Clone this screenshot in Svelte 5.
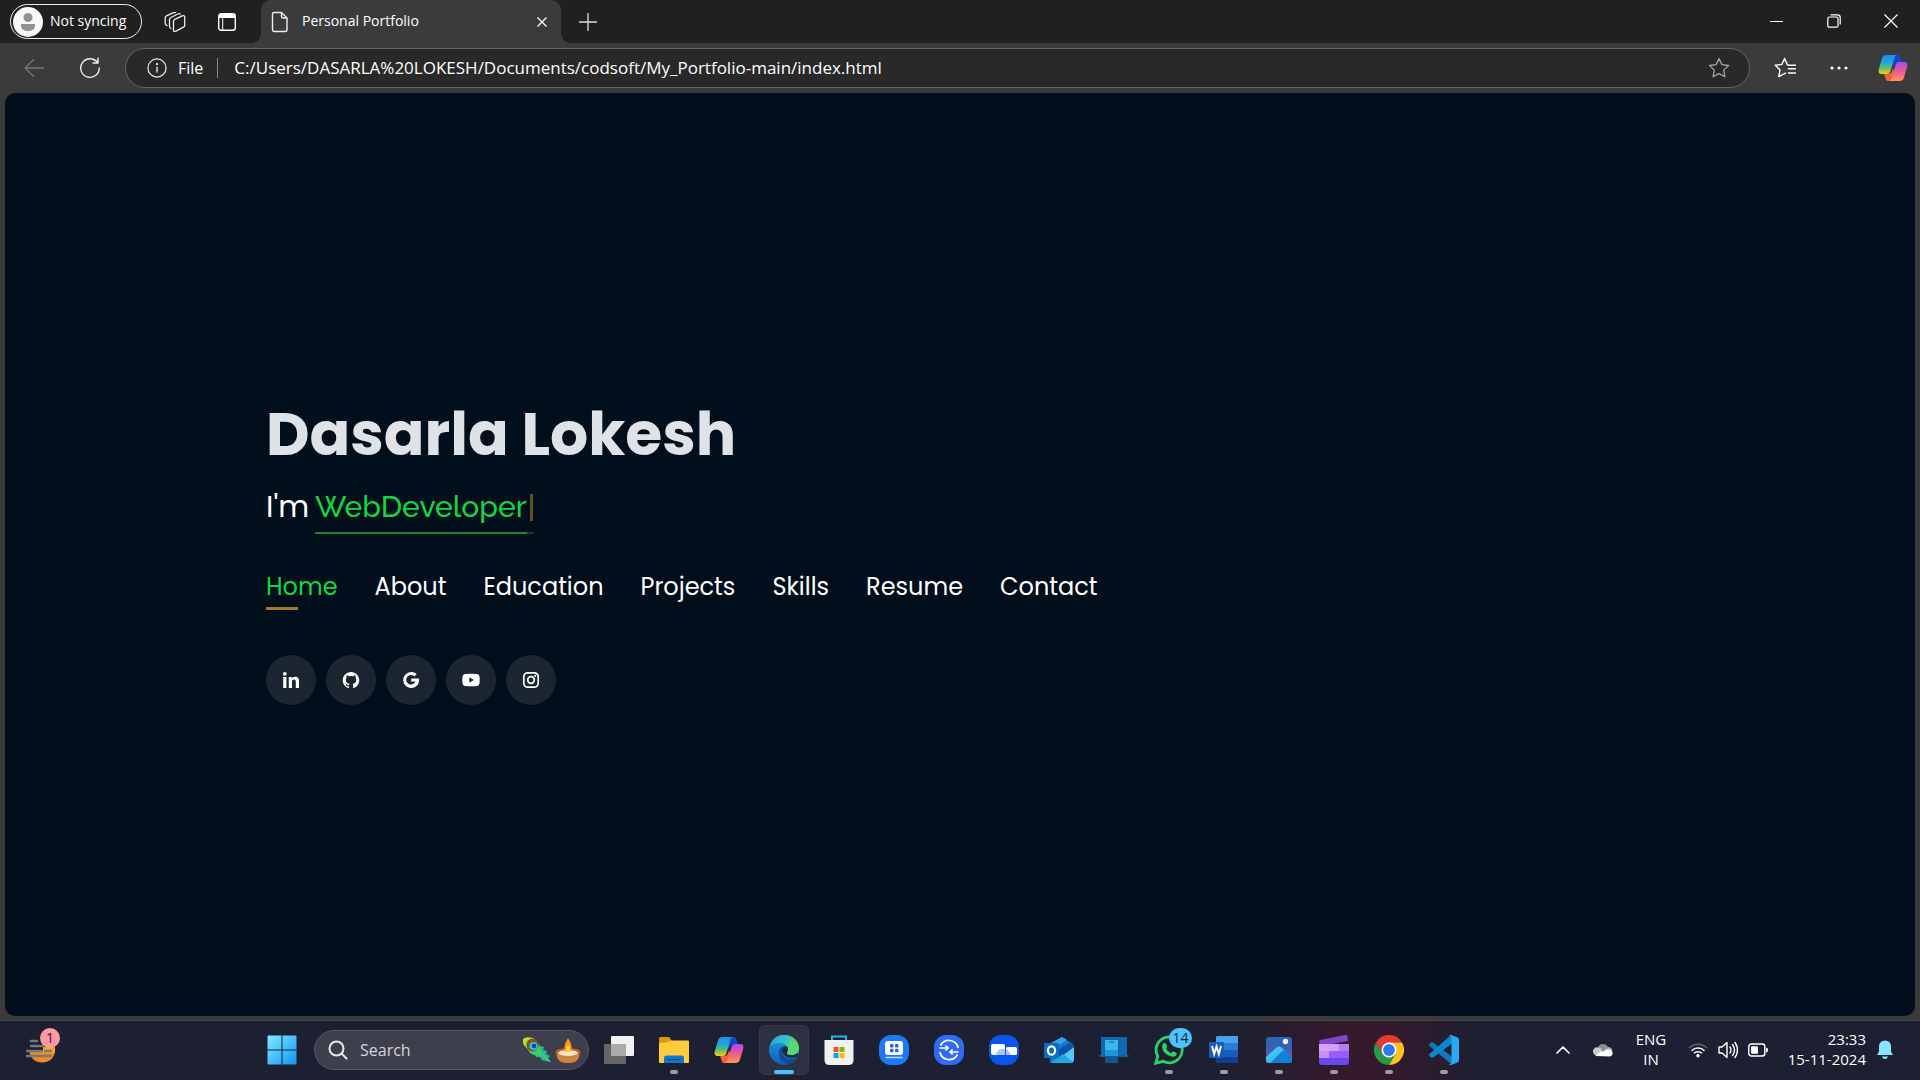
<script>
  const navLinks = ['Home', 'About', 'Education', 'Projects', 'Skills', 'Resume', 'Contact'];
</script>

{#snippet copilot()}
  <svg viewBox="0 0 30 28" width="30" height="28" aria-hidden="true">
    <defs>
      <linearGradient id="cpA" x1="0" y1="0" x2="0" y2="1"><stop offset="0" stop-color="#1c8fe8" /><stop offset=".4" stop-color="#22a6dd" /><stop offset=".68" stop-color="#5fbf6a" /><stop offset="1" stop-color="#fccb10" /></linearGradient>
      <linearGradient id="cpB" x1="0" y1="0" x2="0" y2="1"><stop offset="0" stop-color="#a54df0" /><stop offset=".45" stop-color="#e8559c" /><stop offset="1" stop-color="#ff9a4a" /></linearGradient>
    </defs>
    <path d="M16 1h3.500c1.700 0 2.500 1 3 2.600L23.800 8H20c-2 0-3.500 1.300-4 3l-1 3-2-7z" fill="#1647c8" />
    <path d="M14 27h-3.500c-1.700 0-2.500-1-3-2.600L6.200 20H10c2 0 3.500-1.300 4-3l1-3 2 7z" fill="#f4603c" />
    <path d="M8.500 1H19c-1.600.3-2.300 1.600-2.700 3L12.500 17c-.6 2-1.700 3-3.500 3H3.500C1 20 0 18 .7 15.500L4 4.500C4.700 2.200 6 1 8.500 1z" fill="url(#cpA)" />
    <path d="M21.500 27H11c1.600-.3 2.300-1.600 2.700-3L17.500 11c.6-2 1.700-3 3.500-3h5.500c2.500 0 3.500 2 2.800 4.500L26 23.500c-.7 2.300-2 3.500-4.500 3.500z" fill="url(#cpB)" />
  </svg>
{/snippet}

<div class="screen">
  <header class="tabs">
    <button class="profile">
      <svg viewBox="0 0 30 30" width="30" height="30" aria-hidden="true"><circle cx="15" cy="15" r="15" fill="#f8f8f8" /><circle cx="15" cy="10.500" r="4.500" fill="#929292" /><path d="M8 17h14v2c0 3-3 5-7 5s-7-2-7-5z" fill="#929292" /></svg>
      <span>Not syncing</span>
    </button>
    <button class="strip-btn" aria-label="Workspaces">
      <svg viewBox="0 0 22 22" width="22" height="22" fill="none" stroke="#eee" stroke-width="1.300" stroke-linejoin="round" stroke-linecap="round" aria-hidden="true"><path d="M9.500 10.500q0-1.500 1.300-2.200l7.400-3.500q2.500-.8 2.500 1.400v8q0 1.300-1.200 1.900l-7.500 4q-2.500 1-2.500-1.200z" /><path d="M7 17.500q-1.500-.5-1.500-2.500V8.700q0-1.500 1.300-2.200l7-3.500q1.500-.6 2.500 0" /><path d="M3 14.500q-1.800-.5-1.800-2.500V7q0-1.500 1.300-2.200l6.500-3q1.500-.7 2.500-.2" /></svg>
    </button>
    <button class="strip-btn" aria-label="Vertical tabs">
      <svg viewBox="0 0 20 20" width="20" height="20" aria-hidden="true"><rect x="1.700" y="1.700" width="16.600" height="16.600" rx="2.500" fill="none" stroke="#fff" stroke-width="1.400" /><path d="M2 3.500Q2 2 3.500 2h13Q18 2 18 3.500V6H2z" fill="#fff" /><path d="M5.700 6v12" stroke="#fff" /></svg>
    </button>
    <div class="tab">
      <svg viewBox="0 0 18 22" width="18" height="22" fill="none" stroke="#eee" stroke-width="1.400" stroke-linejoin="round" aria-hidden="true"><path d="M3 1.500h7.500L16 7v11.500q0 2-2 2H3.500q-2 0-2-2v-15q0-2 1.500-2z" /><path d="M10.500 1.500V5.500q0 1.500 1.500 1.500h4" /></svg>
      <span>Personal Portfolio</span>
      <button aria-label="Close tab"><svg viewBox="0 0 10 10" width="10" height="10" stroke="#fff" stroke-width="1.300" aria-hidden="true"><path d="M.5.5l9 9M9.500.5l-9 9" /></svg></button>
    </div>
    <button class="new-tab" aria-label="New tab"><svg viewBox="0 0 18 18" width="18" height="18" stroke="#ddd" stroke-width="1.300" aria-hidden="true"><path d="M9 0v18M0 9h18" /></svg></button>
    <div class="window-controls">
      <button aria-label="Minimize"><svg viewBox="0 0 14 14" width="14" height="14" aria-hidden="true"><path d="M0 7.500h13" stroke="#fff" /></svg></button>
      <button aria-label="Restore"><svg viewBox="0 0 14 14" width="14" height="14" fill="none" stroke="#fff" stroke-width="1.200" aria-hidden="true"><rect x=".8" y="3" width="10.200" height="10.200" rx="1.500" /><path d="M3.500.8h7q2.700 0 2.700 2.700v7" /></svg></button>
      <button aria-label="Close"><svg viewBox="0 0 14 14" width="14" height="14" stroke="#fff" stroke-width="1.200" aria-hidden="true"><path d="M.5.500l13 13M13.500.5l-13 13" /></svg></button>
    </div>
  </header>

  <div class="toolbar">
    <button class="tool" aria-label="Back"><svg viewBox="0 0 20 18" width="20" height="18" fill="none" stroke="#777" stroke-width="1.300" stroke-linecap="round" stroke-linejoin="round" aria-hidden="true"><path d="M19.500 9H1M9.500.8L1 9l8.500 8.200" /></svg></button>
    <button class="tool" aria-label="Refresh"><svg viewBox="0 0 22 22" width="22" height="22" fill="none" stroke="#eee" stroke-width="1.400" stroke-linecap="round" stroke-linejoin="round" aria-hidden="true"><path d="M18.500 5.500A9.300 9.300 0 1 0 20.300 11M19 1.300v4.700h-5" /></svg></button>
    <form class="address">
      <svg viewBox="0 0 22 22" width="20" height="20" fill="none" stroke="#eee" stroke-width="1.300" aria-hidden="true"><circle cx="11" cy="11" r="10" /><path d="M11 9.500v6.500" stroke-width="1.500" /><circle cx="11" cy="6.700" r=".6" fill="#eee" /></svg>
      <label for="url">File</label>
      <i class="divider"></i>
      <input id="url" type="text" value="C:/Users/DASARLA%20LOKESH/Documents/codsoft/My_Portfolio-main/index.html" />
      <button type="button" aria-label="Add to favorites"><svg viewBox="0 0 22 22" width="22" height="22" fill="none" stroke="#a5a5a5" stroke-width="1.300" stroke-linejoin="round" aria-hidden="true"><path d="M11 1.500l2.900 6.100 6.600.9-4.800 4.600 1.200 6.700-5.900-3.200-5.900 3.200 1.200-6.700L1.500 8.500l6.600-.9z" /></svg></button>
    </form>
    <button class="tool action" aria-label="Favorites"><svg viewBox="0 0 22 22" width="22" height="22" fill="none" stroke="#fff" stroke-width="1.400" stroke-linejoin="round" stroke-linecap="round" aria-hidden="true"><path d="M14.500 8.200l-1.200-.6L10.600 1.500 7.800 7.400l-6.500.9L6 13l-1.200 6.600 5.800-3 1-.6M14.500 11.700h7M14.500 8.200h7M14.500 16h7" /></svg></button>
    <button class="tool action" aria-label="Settings and more"><svg viewBox="0 0 18 4" width="18" height="4" fill="#fff" aria-hidden="true"><circle cx="2" cy="2" r="1.600" /><circle cx="9" cy="2" r="1.600" /><circle cx="16" cy="2" r="1.600" /></svg></button>
    <button class="tool action" aria-label="Copilot">{@render copilot()}</button>
  </div>

  <main>
    <div class="hero">
      <h1>Dasarla Lokesh</h1>
      <h2>I'm <span class="typed">WebDeveloper</span><span class="cursor"></span></h2>
      <nav>
        {#each navLinks as link, i}
          <a href="#{link.toLowerCase()}" class:active={i === 0}>{link}</a>
        {/each}
      </nav>
      <div class="social">
        <a href="#linkedin" aria-label="LinkedIn"><svg viewBox="0 0 18 18" aria-hidden="true"><circle cx="2.800" cy="2.800" r="1.900" /><path d="M1.200 6h3.200v11H1.200zM6.800 6h3v1.500c.6-1 1.800-1.800 3.400-1.800 3 0 3.800 2 3.800 4.700V17h-3.200v-5.700c0-1.500-.3-2.800-1.800-2.800s-2 1.200-2 2.800V17H6.800z" /></svg></a>
        <a href="#github" aria-label="GitHub"><svg viewBox="0 0 24 24" aria-hidden="true"><path d="M12 1.300C5.900 1.300 1 6.200 1 12.300c0 4.900 3.100 9 7.500 10.400.6.100.8-.2.800-.5v-2c-3.100.7-3.700-1.300-3.700-1.300-.5-1.300-1.200-1.600-1.200-1.600-1-.7.100-.7.100-.7 1.100.1 1.700 1.100 1.700 1.100 1 1.700 2.600 1.200 3.200.9.100-.7.400-1.200.7-1.500-2.400-.3-5-1.200-5-5.400 0-1.200.4-2.200 1.100-3-.1-.3-.5-1.400.1-2.900 0 0 .9-.3 3 1.100a10.500 10.500 0 0 1 5.500 0c2.100-1.400 3-1.100 3-1.100.6 1.500.2 2.600.1 2.900.7.800 1.100 1.800 1.100 3 0 4.200-2.600 5.100-5 5.400.4.300.8 1 .8 2v3.100c0 .3.200.6.800.5A11 11 0 0 0 12 1.300z" /></svg></a>
        <a href="#google" aria-label="Google"><svg viewBox="0 0 18 18" aria-hidden="true"><path d="M9.200 7.500H17c.8 5-2.200 9.500-7.700 9.500A8 8 0 1 1 14.700 3.100l-2.300 2.300A4.800 4.800 0 1 0 13.500 10.500H9.200z" /></svg></a>
        <a href="#youtube" aria-label="YouTube"><svg viewBox="0 0 18 18" aria-hidden="true"><path fill-rule="evenodd" d="M3 3q6-.6 12 0 2.300.2 2.500 2.500.5 3.500 0 7Q17.200 14.800 15 15q-6 .6-12 0Q.8 14.800.5 12.500q-.5-3.500 0-7Q.8 3.200 3 3zM7.300 6.300v5.400L11.800 9z" /></svg></a>
        <a href="#instagram" aria-label="Instagram"><svg viewBox="0 0 18 18" aria-hidden="true"><rect x="1.800" y="1.800" width="14.400" height="14.400" rx="4" fill="none" stroke="#fff" stroke-width="1.700" /><circle cx="9" cy="9" r="3.300" fill="none" stroke="#fff" stroke-width="1.700" /><circle cx="13.200" cy="4.800" r="1.100" /></svg></a>
      </div>
    </div>
  </main>

  <footer>
    <button class="widget" aria-label="Widgets">
      <svg viewBox="0 0 30 26" width="30" height="26" aria-hidden="true"><path d="M3 13h26c0 7-5 12.500-13 12.500S4 20 3 13z" fill="#f08a24" /><path d="M17 10h12v6H17z" fill="#f5a81e" /><path d="M5 4h6M5 9h12M1 14h15M19 14h6M1 19h24" stroke="#74777c" stroke-width="2.600" stroke-linecap="round" /></svg>
      <b class="badge pink">1</b>
    </button>
    <div class="apps">
      <button class="app" aria-label="Start"><svg viewBox="0 0 30 30" aria-hidden="true"><defs><linearGradient id="win" x1="0" y1="0" x2="1" y2="1"><stop offset="0" stop-color="#7aeefd" /><stop offset="1" stop-color="#1193fb" /></linearGradient></defs><path d="M1.500.5h13v14H.5v-13q0-1 1-1zM15.500.5h13q1 0 1 1v13h-14zM.5 15.500h14v14h-13q-1 0-1-1zM15.500 15.500h14v13q0 1-1 1h-13z" fill="url(#win)" /></svg></button>
      <label class="search">
        <svg viewBox="0 0 20 20" width="20" height="20" fill="none" stroke="#e8e8ec" stroke-width="2" stroke-linecap="round" aria-hidden="true"><circle cx="8.500" cy="8.500" r="7" /><path d="M13.500 13.500l5 5" /></svg>
        <input type="text" placeholder="Search" aria-label="Search" />
        <svg class="festive" viewBox="0 0 60 28" width="60" height="28" aria-hidden="true"><path d="M14 6l4 4 4 1-1 3 4 1-1 3 4 2-2 2 3 4-5-1-4-1-2-3-4 0-1-3-4 0-1-4-2-3z" fill="#2bbf86" /><path d="M1 3Q4 0 11 2q7 4 5 14-6 1-10-3Q0 9 1 3z" fill="#b8e02c" /><path d="M6 4q7-1 11 5 3 6 1 11Q8 20 5 12 3 6 6 4z" fill="#38cf6b" /><ellipse cx="10.500" cy="9" rx="6" ry="6.500" fill="#9a4a17" /><circle cx="11.500" cy="10" r="4" fill="#19c9ee" /><circle cx="12" cy="10" r="2.200" fill="#12349e" /><path d="M17 16l11 10" stroke="#53d68e" /><path d="M34 16q1 11 9 11h6q8 0 9-11z" fill="#cf8342" /><ellipse cx="46" cy="16" rx="12.500" ry="3.800" fill="#b86a31" /><ellipse cx="46" cy="17" rx="10" ry="3" fill="#fae2bb" /><path d="M46 2q-6 10-2 14h4q4-4-2-14z" fill="#ff981f" /><path d="M46 9q-3 4-1 7h2q3-3-1-7z" fill="#ffd53e" /></svg>
      </label>
      <button class="app" aria-label="Task view"><svg viewBox="0 0 30 30" aria-hidden="true"><rect x="7" y="1" width="23" height="20" rx="1" fill="#f1f1f1" /><rect x="0" y="9" width="22" height="20" rx="1" fill="#666" /><path d="M7 9h15v12H7z" fill="#aaa" /></svg></button>
      <button class="app" aria-label="File Explorer"><svg viewBox="0 0 30 30" aria-hidden="true"><path d="M0 3.500Q0 2 1.500 2H9q1 0 1.500.5L13 6v5H0z" fill="#dc9a05" /><path d="M0 8q8 0 12-2.500h17q1 0 1 1V27q0 1-1 1H1q-1 0-1-1z" fill="#ffcd3c" /><path d="M5 28v-5q0-2.500 2.500-2.500h15q2.500 0 2.500 2.500v5z" fill="#1177cb" /><path d="M8.500 24.500h13" stroke="#0b4f94" stroke-width="1.200" /></svg><i class="dot"></i></button>
      <button class="app" aria-label="Copilot">{@render copilot()}</button>
      <button class="app current" aria-label="Microsoft Edge"><svg viewBox="0 0 30 30" aria-hidden="true"><defs><linearGradient id="edA" x1="0" y1=".2" x2="1" y2=".5"><stop offset="0" stop-color="#2ba3e6" /><stop offset=".5" stop-color="#34c3c5" /><stop offset="1" stop-color="#65de50" /></linearGradient><linearGradient id="edB" x1="0" y1="0" x2="0" y2="1"><stop offset="0" stop-color="#1da0e4" /><stop offset="1" stop-color="#0960b8" /></linearGradient></defs><circle cx="15" cy="15" r="15" fill="url(#edB)" /><path d="M1 11C3 4 8 0 15 0c9 0 15 6 15 13 0 4.500-3.500 7-7.500 7-3 0-4.500-1-4.500-2 0-.8 1-1.200 1-3.500 0-4-4-6.500-8.500-6.500C6 8 2.500 9.500 1 11z" fill="url(#edA)" /><path d="M17 11c-5 0-8 4-7 9 1 5 5 8.500 9 9.500 4-1 7-3.500 8.500-6.500-8 3-14-.5-14-5.500 0-3 1.500-5 3.500-6.500z" fill="#104a93" /><path d="M17.500 11.500c-3 0-4.500 2.500-4 5 .7 4 5.500 7.500 12 6l3.500-.5V18l-6.500 2c-3 0-4.500-1-4.500-2 0-.8 1-1.200 1-3.500 0-1.500-.5-2.500-1.500-3z" fill="#1d2b40" /><path d="M19 14.500c0 2.300-1 2.700-1 3.500 0 1 1.500 2 4.500 2 4 0 7.500-2.500 7.500-7L22 6z" fill="#58d873" /></svg><i class="dot"></i></button>
      <button class="app" aria-label="Microsoft Store"><svg viewBox="0 0 30 30" aria-hidden="true"><path d="M8 6V1.500h14V6" fill="none" stroke="#27b4e8" stroke-width="2" /><path d="M.500 5h29v20q0 5-5 5h-19q-5 0-5-5z" fill="#f1f1f1" /><path d="M9.500 12h5v5h-5z" fill="#f25022" /><path d="M15.500 12h5v5h-5z" fill="#7fba00" /><path d="M9.500 18h5v5h-5z" fill="#00a4ef" /><path d="M15.500 18h5v5h-5z" fill="#ffb900" /></svg></button>
      <button class="app" aria-label="Device care"><svg viewBox="0 0 30 30" aria-hidden="true"><rect width="30" height="30" rx="12" fill="#1b79fa" /><rect x="6" y="6" width="18" height="14" rx="3" fill="#fff" /><g fill="#2368c4"><rect x="11" y="9" width="3.500" height="3.500" rx="1" /><rect x="16" y="9" width="3.500" height="3.500" rx="1" /><rect x="11" y="13.700" width="3.500" height="3.500" rx="1" /><rect x="16" y="13.700" width="3.500" height="3.500" rx="1" /></g><path d="M7 22.500h16" stroke="#b9d9ff" stroke-width="1.500" stroke-linecap="round" /></svg></button>
      <button class="app" aria-label="Quick Share"><svg viewBox="0 0 30 30" fill="none" stroke="#fff" stroke-width="1.700" aria-hidden="true"><rect width="30" height="30" rx="12" fill="#2f6bf6" stroke="none" /><path d="M6.500 10.500A9.500 9.500 0 0 1 24.200 13M23.500 19.500A9.500 9.500 0 0 1 5.800 17M5.500 13H14M11.500 10.500l2.700 2.500-2.700 2.500M24.500 17H16M18.700 14.500L16 17l2.700 2.500" /></svg></button>
      <button class="app" aria-label="Screen share"><svg viewBox="0 0 30 30" aria-hidden="true"><rect width="30" height="30" rx="12" fill="#0a55ee" /><rect x="2" y="9" width="14" height="11" rx="2" fill="#fff" /><rect x="17" y="12" width="11" height="8" rx="1.500" fill="#fff" /><path d="M7 20a7 7 0 0 1 9-6v6zM17 14q4 2 4.500 6H17z" fill="#a7c5f5" /></svg></button>
      <button class="app" aria-label="Outlook"><svg viewBox="0 0 30 30" aria-hidden="true"><path d="M6 9L18 2l12 8v14q0 4-4 4H9q-3 0-3-3z" fill="#1279d0" /><path d="M6 8.500L18 2l5 3L9 14z" fill="#35a3e8" /><path d="M12 16L27 7l3 3v4L12 24z" fill="#1250a3" /><path d="M30 12v12q0 4-4 4H9z" fill="#54c9f4" /><path d="M6 28l13-9 10 8q-1 1-3 1z" fill="#22a6e4" /><rect y="8" width="15" height="15" rx="1" fill="#0b6cc2" /><ellipse cx="7.500" cy="15.500" rx="3.600" ry="4.200" fill="none" stroke="#fff" stroke-width="2.200" /></svg></button>
      <button class="app" aria-label="Phone Link"><svg viewBox="0 0 30 30" aria-hidden="true"><path d="M2 2h26v19H2z" fill="#1268ae" /><path d="M0 20h30l-1.500 2H1.500z" fill="#1d5d95" /><path d="M6 5h13v22q0 1-1 1H7q-1 0-1-1z" fill="#38b9ef" /><path d="M6 15h13v6H6z" fill="#1f95dc" /><path d="M6 21h13v7H6z" fill="#14568f" /><path d="M10 7h5" stroke="#125d91" /></svg></button>
      <button class="app" aria-label="WhatsApp"><svg viewBox="0 0 30 30" aria-hidden="true"><path d="M1.800 28.200l2-7A13 13 0 1 1 9 26.300z" fill="none" stroke="#29d366" stroke-width="2.800" /><path d="M9.500 8.500q1.500-1.500 2.500.3l1.200 2.700q0 1-1.200 2 1.500 3 5 4.700l1.700-1.700q.7-.5 3.300 1.200 1.300.7.500 2-1.300 2.500-4.500 2-8.500-2-10-9.500 0-2.500 1.500-3.700z" fill="#29d366" /></svg><b class="badge blue">14</b><i class="dot"></i></button>
      <button class="app" aria-label="Word"><svg viewBox="0 0 30 30" aria-hidden="true"><path d="M8 1h21v7H7V2z" fill="#41a5ee" /><path d="M7 8h22v7H7z" fill="#2b7cd3" /><path d="M7 15h22v7H7z" fill="#185abd" /><path d="M7 22h22v6H8q-1 0-1-1z" fill="#103f91" /><rect y="7" width="15" height="16" rx="1" fill="#185abd" /><path d="M3 11l2.200 8 2.300-7.500L9.800 19 12 11" fill="none" stroke="#fff" stroke-width="1.900" /></svg><i class="dot"></i></button>
      <button class="app" aria-label="Photos"><svg viewBox="0 0 30 30" aria-hidden="true"><defs><linearGradient id="ph" x1="0" y1="0" x2="0" y2="1"><stop offset="0" stop-color="#2168b9" /><stop offset="1" stop-color="#6a50ae" /></linearGradient><linearGradient id="phM" x1="0" y1="0" x2="1" y2="1"><stop offset="0" stop-color="#43d5f6" /><stop offset="1" stop-color="#2ba8ea" /></linearGradient></defs><rect x="2" y="2" width="26" height="26" rx="3" fill="url(#ph)" /><path d="M2 22l10.500-9.500q2.500-2 5 0L28 23v2q0 3-3 3H5q-3 0-3-3z" fill="url(#phM)" /><path d="M16 18l-9.500 10H25q2 0 2.800-1.500V22.800L20 15z" fill="#1480d4" /><circle cx="21.500" cy="6.500" r="2.700" fill="#f3f3fa" /></svg><i class="dot"></i></button>
      <button class="app" aria-label="Clipchamp"><svg viewBox="0 0 30 30" aria-hidden="true"><path d="M0 7q0-1.500 1.500-2L26 0q2-.3 2.300 1l.7 4q0 1-1 1.200L1 11z" fill="#8146c7" /><path d="M0 9h30v7H0z" fill="#d6a0fa" /><path d="M20 9h10v7H20z" fill="#b57af5" /><path d="M0 16h10v7H0z" fill="#cc8cf4" /><path d="M10 16h20v7H10z" fill="#975ff5" /><path d="M0 23h30v4q0 3-3 3H3q-3 0-3-3z" fill="#6a46ed" /></svg><i class="dot"></i></button>
      <button class="app" aria-label="Chrome"><svg viewBox="0 0 30 30" aria-hidden="true"><path d="M2 7.500A15 15 0 0 1 28 7.500L15 8 8.500 18.700z" fill="#e33b2e" /><path d="M28 7.500A15 15 0 0 1 15 30l6.500-11.200L15 7.500z" fill="#fcc31e" /><path d="M2 7.500A15 15 0 0 0 15 30l6.500-11.200L15 22 8.500 18.700z" fill="#249a47" /><circle cx="15" cy="15" r="7.500" fill="#fff" /><circle cx="15" cy="15" r="5.900" fill="#3079ed" /></svg><i class="dot"></i></button>
      <button class="app" aria-label="Visual Studio Code"><svg viewBox="0 0 30 30" aria-hidden="true"><path d="M1 8.500q1.500-2 3.500-.8L25 23l-3 6L.500 11q-1-1.200.500-2.500z" fill="#1177bb" /><path d="M22 0l3 7L4.500 22.300q-2 1.200-3.500-.8t-.5-2.500z" fill="#0d88cf" /><path d="M22 0l6.500 2.500Q30 3.300 30 5v20q0 1.700-1.500 2.500L22 30q-1 .3-2-.7 2.500.2 2.500-2V2.700Q22.500.5 20 .700 21-.3 22 0z" fill="#2aaaf4" /></svg><i class="dot"></i></button>
    </div>
    <div class="tray">
      <button class="chevron" aria-label="Show hidden icons"><svg viewBox="0 0 14 8" width="14" height="8" fill="none" stroke="#fff" stroke-width="1.700" stroke-linecap="round" stroke-linejoin="round" aria-hidden="true"><path d="M1 7l6-6 6 6" /></svg></button>
      <button class="cloud" aria-label="OneDrive"><svg viewBox="0 0 20 14" width="20" height="14" aria-hidden="true"><path d="M5 4.500a5.500 5.500 0 0 1 10-.5l-3 4z" fill="#8d8f96" /><path d="M1 11a4 4 0 0 1 4-6.500q3 0 5 3L5 13q-3 .3-4-2z" fill="#c8c8cc" /><path d="M15 4a5 5 0 0 1 4.500 3.500L15 9l-4-2z" fill="#b2b3b8" /><path d="M3 13q2-4 7-5 6-3 9 0 2 4-2 5.500z" fill="#fff" /></svg></button>
      <button class="lang"><span>ENG</span><span>IN</span></button>
      <button class="status" aria-label="Network, volume and battery">
        <svg viewBox="0 0 20 16" width="20" height="16" fill="none" stroke="#fff" stroke-width="1.500" aria-hidden="true"><path d="M1 6a12.700 12.700 0 0 1 18 0" stroke="#5e606b" /><path d="M3.500 8.700a9.200 9.200 0 0 1 13 0M6 11.300a5.700 5.700 0 0 1 8 0" /><circle cx="10" cy="13.700" r="1.300" fill="#fff" stroke-width="1" /></svg>
        <svg viewBox="0 0 20 18" width="20" height="18" fill="none" stroke="#fff" stroke-width="1.400" stroke-linejoin="round" stroke-linecap="round" aria-hidden="true"><path d="M1 6h3l5-4.500v15L4 12H1zM12 6q2 3 0 6M14.500 3.500q4 5.500 0 11M17 1.500q5 7.500 0 15" /></svg>
        <svg viewBox="0 0 20 14" width="20" height="14" aria-hidden="true"><rect x=".8" y="1" width="16" height="12" rx="2.500" fill="none" stroke="#fff" stroke-width="1.400" /><rect x="3" y="3.200" width="7" height="7.600" rx="1" fill="#fff" /><path d="M18 4.500q2 0 2 2.500t-2 2.500z" fill="#fff" /></svg>
      </button>
      <button class="clock"><span>23:33</span><span>15-11-2024</span></button>
      <button class="bell" aria-label="Notifications"><svg viewBox="0 0 16 20" width="16" height="20" fill="#86e4ff" aria-hidden="true"><path d="M8 .5q6 .5 6 6v5l2 3.500H0l2-3.500v-5Q2 1 8 .5zM5 16.500h6q-.5 2.500-3 2.500t-3-2.500z" /></svg></button>
    </div>
  </footer>
</div>

<style>
  :global(body) { margin: 0; background: #3b3b3b; }
  .screen { min-height: 100vh; display: flex; flex-direction: column; background: #3b3b3b; color: #fff; font-family: "Segoe UI", "Open Sans", "Noto Sans", sans-serif; }
  button { border: 0; padding: 0; background: none; color: inherit; font: inherit; display: flex; align-items: center; justify-content: center; }
  svg { flex: none; display: block; }
  input { border: 0; outline: 0; padding: 0; background: none; color: inherit; font: inherit; min-width: 0; flex: 1; }

  .tabs { height: 43px; display: flex; align-items: center; background: #202020; padding-left: 10px; }
  .profile { box-sizing: border-box; width: 132px; height: 35px; border: 1px solid #eee; border-radius: 18px; gap: 7px; justify-content: flex-start; padding-left: 2px; font-size: 14px; white-space: nowrap; margin-right: 7px; }
  .profile span { padding-bottom: 2px; }
  .strip-btn { width: 52px; height: 40px; }
  .tab { position: relative; align-self: stretch; box-sizing: border-box; width: 300px; margin-left: 8px; padding: 0 14px 0 10px; display: flex; align-items: center; gap: 13px; border-radius: 10px 10px 0 0; background: #3b3b3b; font-size: 14px; }
  .tab::before, .tab::after { content: ""; position: absolute; bottom: 0; width: 10px; height: 10px; }
  .tab::before { left: -10px; background: radial-gradient(circle at 0 0, #202020 10px, #3b3b3b 10px); }
  .tab::after { right: -10px; background: radial-gradient(circle at 100% 0, #202020 10px, #3b3b3b 10px); }
  .tab span { flex: 1; padding-bottom: 2px; }
  .new-tab { width: 54px; height: 40px; }
  .window-controls { display: flex; align-self: stretch; margin-left: auto; padding: 0 1px 1px 0; }
  .window-controls button { width: 57px; }

  .toolbar { height: 50px; display: flex; align-items: center; padding: 0 0 0 6px; }
  .tool { width: 56px; height: 40px; }
  .action { width: 54px; }
  .address { box-sizing: border-box; flex: 1; height: 40px; margin: 0 8px 0 7px; display: flex; align-items: center; border: 1px solid #656565; border-radius: 20px; background: #292929; padding: 0 19px 0 21px; font-size: 16px; }
  .address label { margin-left: 11px; }
  .address input { font-size: 17px; padding-bottom: 2px; }
  .divider { width: 1px; height: 20px; margin: 0 16px 0 14px; background: #888; }

  main { flex: 1; display: flex; align-items: center; margin: 0 5px 4px; border-radius: 10px; background: #010e1b; }
  .hero { padding: 0 0 6px 261px; font-family: Poppins, Inter, sans-serif; }
  h1 { margin: 0; font-size: 60px; line-height: 72px; font-weight: 700; color: #dfe2e7; }
  h2 { margin: 12px 0 0; height: 52px; font-size: 30px; line-height: 50px; font-weight: 400; display: flex; gap: 0 6px; }
  .typed { box-sizing: border-box; height: 52px; font-family: Raleway, Lato, sans-serif; font-weight: 500; color: #12d640; border-bottom: 2px solid #1b8535; }
  .cursor { box-sizing: border-box; margin-left: -6px; width: 7px; height: 52px; border-bottom: 2px solid #0b3b29; background: linear-gradient(#66501a, #66501a) 3px 12px / 3px 27px no-repeat; }
  nav { display: flex; gap: 37px; margin-top: 31px; font-size: 24px; line-height: 44px; }
  nav a { position: relative; color: #fff; text-decoration: none; }
  nav a.active { color: #12d640; }
  nav a.active::after { content: ""; position: absolute; left: 0; bottom: -1px; width: 32px; height: 3px; background: #a17c22; }
  .social { display: flex; gap: 10px; margin-top: 46px; }
  .social a { width: 50px; height: 50px; border-radius: 50%; background: #1b2632; display: flex; align-items: center; justify-content: center; }
  .social svg { width: 18px; height: 18px; fill: #fff; }

  footer { box-sizing: border-box; height: 60px; padding-bottom: 1px; display: flex; align-items: center; border-top: 1px solid #43454d; background: linear-gradient(90deg, transparent 64%, #3a182bcc 70%, #3a182bcc 72%, transparent 77%), #1d2032; }
  .widget { position: relative; width: 30px; height: 40px; margin-left: 26px; }
  .badge { position: absolute; box-sizing: border-box; height: 20px; border-radius: 10px; color: #152434; font-size: 14px; line-height: 20px; font-weight: 400; text-align: center; }
  .pink { width: 20px; top: -2px; right: -4px; background: #ff99a4; }
  .blue { width: 23px; top: 2px; right: 1px; background: #4cc2ff; }
  .apps { display: flex; align-items: center; gap: 5px; margin-left: 201px; }
  .app { position: relative; box-sizing: border-box; width: 50px; height: 50px; border: 1px solid transparent; border-radius: 6px; }
  .app svg { width: 30px; height: 30px; }
  .current { background: #2d3040; border-color: #373a49; }
  .dot { position: absolute; bottom: 0; left: 50%; margin-left: -4px; width: 8px; height: 4px; border-radius: 2px; background: #9c9da4; }
  .current .dot { width: 20px; margin-left: -10px; background: #4cc2ff; }
  .search { box-sizing: border-box; width: 275px; height: 40px; margin: 0 0 0 2px; padding: 0 6px 0 13px; display: flex; align-items: center; gap: 12px; border: 1px solid #555663; border-radius: 20px; background: #3e3f4d; font-size: 16px; }
  .search input { color: #d5d5da; }
  .search input::placeholder { color: #d5d5da; opacity: 1; }
  .tray { display: flex; align-items: center; margin-left: auto; padding-right: 27px; font-size: 15px; line-height: 20px; }
  .chevron { width: 40px; height: 40px; }
  .cloud { width: 40px; height: 40px; }
  .lang { flex-direction: column; width: 56px; padding-bottom: 2px; }
  .status { gap: 10px; width: 98px; }
  .clock { flex-direction: column; align-items: flex-end; width: 89px; padding-bottom: 2px; white-space: nowrap; }
  .bell { margin-left: 11px; }
</style>
